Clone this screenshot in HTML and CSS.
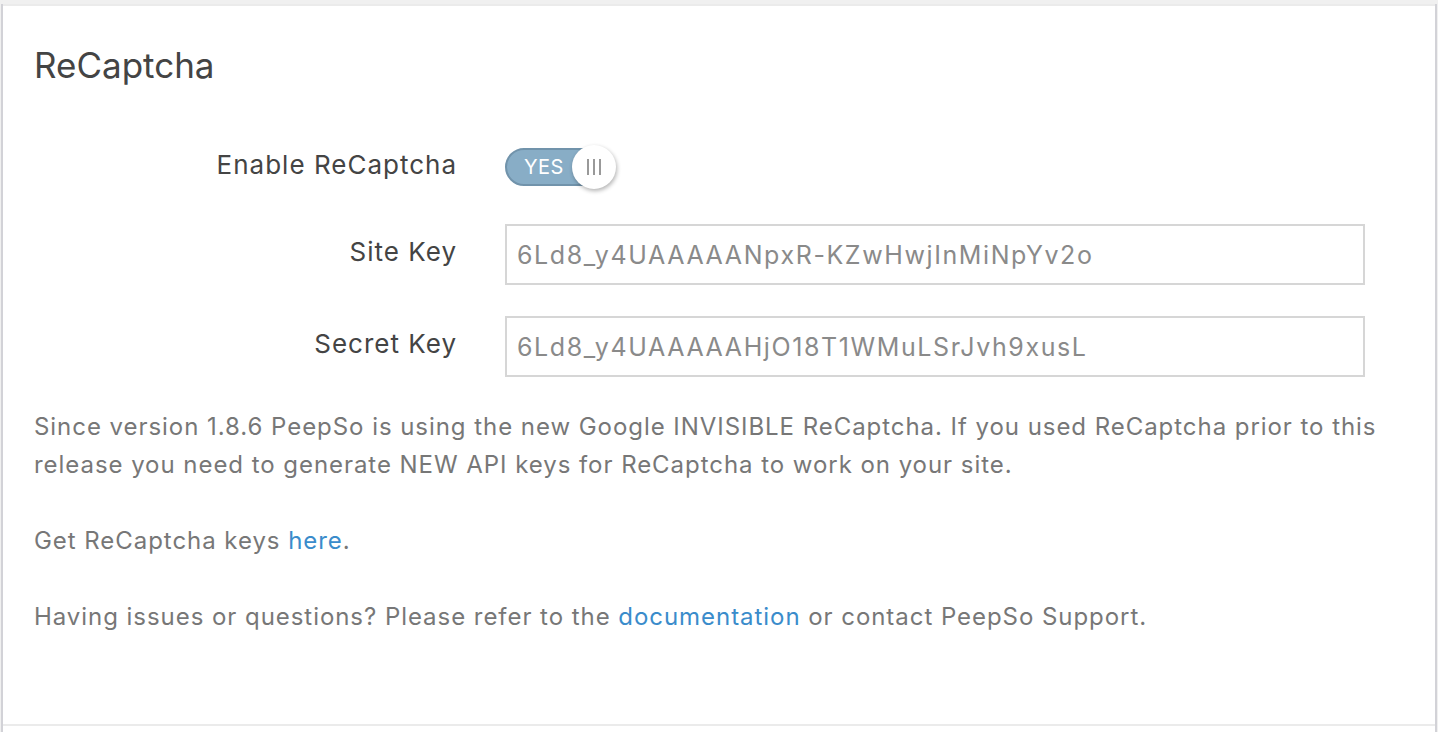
FILE: index.html
```html
<!DOCTYPE html>
<html lang="en">
  <head>
    <meta charset="UTF-8" />
    <meta name="viewport" content="width=device-width, initial-scale=1.0" />
    <title>ReCaptcha Settings</title>
    <link rel="stylesheet" href="styles.css">
  </head>
  <body>
    <div class="frame">
      <div class="box">
        <h2 class="box-title">ReCaptcha</h2>

        <div class="form-row form-row-switch">
          <label class="form-label">Enable ReCaptcha</label>
          <div class="form-field">
            <div class="switch">
              <span class="switch-text">YES</span>
              <span class="switch-knob"><i></i><i></i><i></i></span>
            </div>
          </div>
        </div>

        <div class="form-row">
          <label class="form-label" for="siteKey">Site Key</label>
          <div class="form-field">
            <input type="text" id="siteKey" class="form-input" value="6Ld8_y4UAAAAANpxR-KZwHwjInMiNpYv2o" />
          </div>
        </div>

        <div class="form-row">
          <label class="form-label" for="secretKey">Secret Key</label>
          <div class="form-field">
            <input type="text" id="secretKey" class="form-input" value="6Ld8_y4UAAAAAHjO18T1WMuLSrJvh9xusL" />
          </div>
        </div>

        <div class="box-notes">
          <p>Since version 1.8.6 PeepSo is using the new Google INVISIBLE ReCaptcha. If you used ReCaptcha prior to this release you need to generate NEW API keys for ReCaptcha to work on your site.</p>
          <p>Get ReCaptcha keys <a href="#">here</a>.</p>
          <p>Having issues or questions? Please refer to the <a href="#">documentation</a> or contact PeepSo Support.</p>
        </div>
      </div>
    </div>
  </body>
</html>
```

FILE: styles.css
```css
body {
  margin: 0;
  padding: 0;
  font-family: Inter, "Noto Sans", sans-serif;
  background-color: #f0f0f0;
}

/* Outer frame with side borders */
.frame {
  width: 1432px;
  min-height: 732px;
  margin-left: 1px;
  background-color: #fff;
  border-left: 2px solid #d2d2d7;
  border-right: 2px solid #d2d2d7;
}

.box {
  margin-top: 4px;
  height: 718px;
  border-top: 2px solid #ebebeb;
  border-bottom: 2px solid #ebebeb;
  padding: 0 31px;
}

.box-title {
  margin: 0;
  padding: 35px 0 59px 0;
  font-size: 35px;
  font-weight: 400;
  line-height: 48px;
  color: #444;
}

/* Form rows */
.form-row {
  display: grid;
  grid-template-columns: 423px 1fr;
  column-gap: 48px;
  align-items: center;
  margin-bottom: 31px;
}

.form-row-switch {
  margin-bottom: 38px;
}

.form-label {
  padding-bottom: 6px;
  text-align: right;
  font-size: 26px;
  letter-spacing: 1px;
  color: #444;
}

.form-field {
  padding-right: 39px;
}

.form-input {
  width: 100%;
  height: 61px;
  box-sizing: border-box;
  padding: 0 10px;
  font-family: Inter, "Noto Sans", sans-serif;
  font-size: 25px;
  letter-spacing: 1.6px;
  color: #8a8a8a;
  border: 2px solid #d6d6d6;
  border-radius: 0;
  outline: none;
}

/* Toggle switch */
.switch {
  position: relative;
  width: 108px;
  height: 38px;
  box-sizing: border-box;
  border: 2px solid #7193ab;
  border-radius: 19px;
  background-color: #88adc6;
}

.switch-text {
  display: block;
  padding-left: 17px;
  font-size: 20px;
  letter-spacing: 0.5px;
  line-height: 34px;
  color: #fff;
}

.switch-knob {
  position: absolute;
  top: -5px;
  right: -5px;
  width: 44px;
  height: 44px;
  display: flex;
  justify-content: center;
  align-items: center;
  gap: 4px;
  border-radius: 50%;
  background-color: #fff;
  box-shadow: 1px 2px 4px rgba(0, 0, 0, 0.3);
}

.switch-knob i {
  width: 2px;
  height: 16px;
  background-color: #999;
}

/* Notes below the form */
.box-notes {
  margin-top: 6px;
}

.box-notes p {
  margin: 0 0 38px 0;
  font-size: 24px;
  letter-spacing: 0.95px;
  line-height: 38px;
  color: #777;
}

.box-notes a {
  color: #3a8ccb;
  text-decoration: none;
}
```
